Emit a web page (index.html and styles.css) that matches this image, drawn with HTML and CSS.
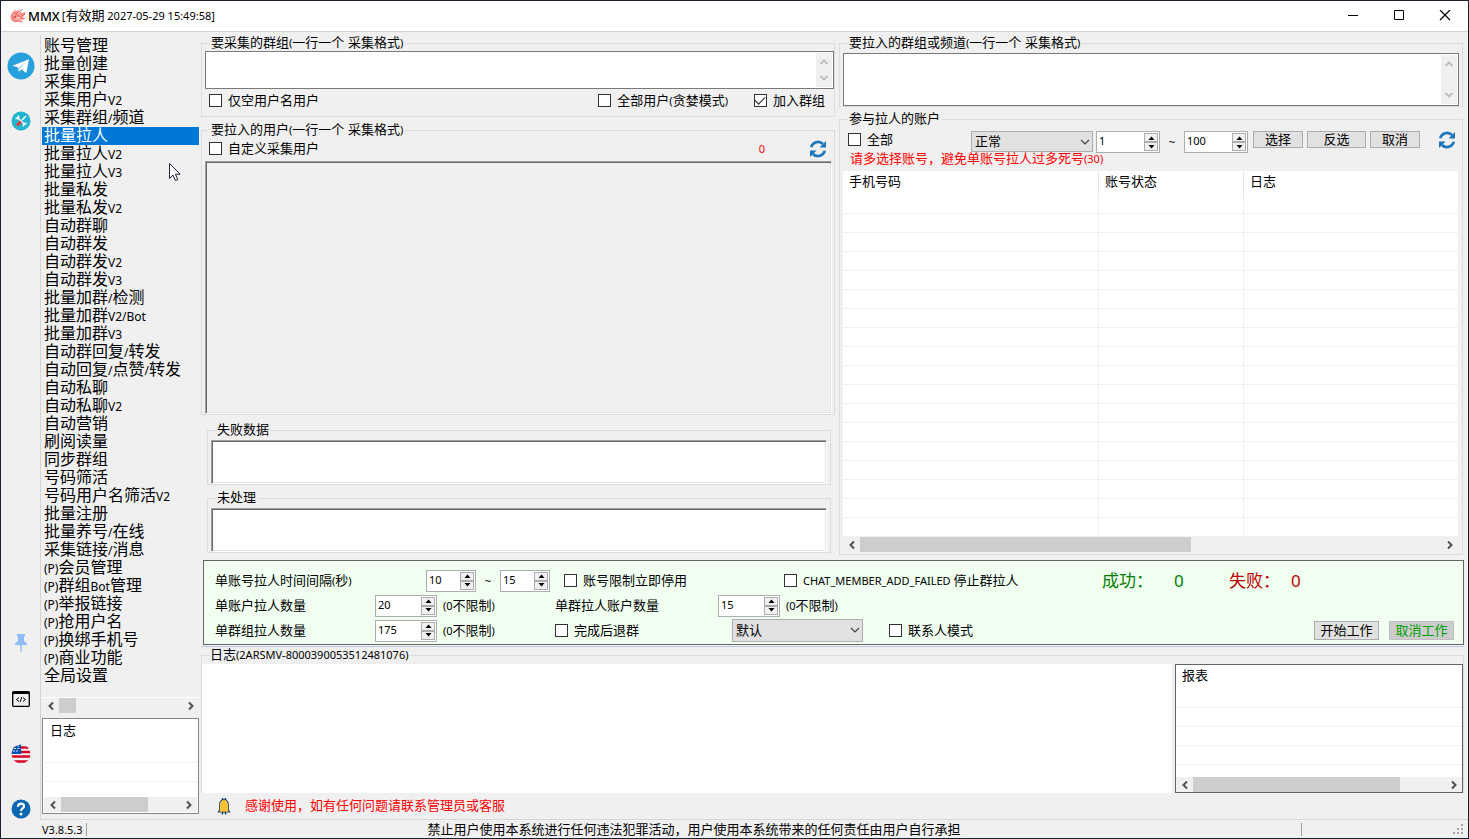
FILE: index.html
```html
<!DOCTYPE html>
<html lang="zh-CN">
<head>
    <meta charset="UTF-8">
    <meta name="viewport" content="width=device-width, initial-scale=1.0">
    <title>MMX</title>
    <link rel="stylesheet" href="styles.css">
</head>
<body>
    <!-- shared symbols -->
    <svg class="defs" aria-hidden="true">
        <symbol id="left" viewBox="0 0 10 10"><path d="M7 1.5 3.5 5 7 8.5" fill="none" stroke="currentColor" stroke-width="2"/></symbol>
        <symbol id="right" viewBox="0 0 10 10"><path d="M3 1.5 6.5 5 3 8.5" fill="none" stroke="currentColor" stroke-width="2"/></symbol>
        <symbol id="up" viewBox="0 0 10 10"><path d="M1.5 7 5 3.5 8.5 7" fill="none" stroke="currentColor" stroke-width="2"/></symbol>
        <symbol id="down" viewBox="0 0 10 10"><path d="M1.5 3 5 6.5 8.5 3" fill="none" stroke="currentColor" stroke-width="2"/></symbol>
        <symbol id="chevron" viewBox="0 0 10 10"><path d="M1 3 5 7 9 3" fill="none" stroke="currentColor" stroke-width="1.2"/></symbol>
        <symbol id="tri-up" viewBox="0 0 7 4"><path d="M.5 4h6L3.5 .5z"/></symbol>
        <symbol id="tri-down" viewBox="0 0 7 4"><path d="M.5 0h6L3.5 3.5z"/></symbol>
        <symbol id="refresh" viewBox="0 0 18 18">
            <path d="M2.2 7.2A7 7 0 0 1 14 4M15.8 10.8A7 7 0 0 1 4 14" fill="none" stroke="#1c75bc" stroke-width="2.6"/>
            <path d="M17 1v6.5h-6.5zM1 17v-6.5h6.5z" fill="#1c75bc"/>
        </symbol>
    </svg>

    <header class="titlebar">
        <svg class="app-icon" viewBox="0 0 16 16">
            <path d="M2 5 6 1 5 4l3-1.500c2 0 3 1.500 3.500 3L15 4c1 2-.5 4-2.500 5 1 1 2 1.500 3 1-1 2-3 2-4 1 0 2 1 2.500 2 2.500-2 1.500-4 .5-5 0C6 15 2 14 1 11c-1-2 0-4 1-6z" fill="#f4837d"/>
            <path d="M3 6c2 3 4 4 7 4M4 12c2-2 5-1 8 1M9 4c0 2 1 3 2 4" fill="none" stroke="#fbd6d3"/>
            <circle cx="5" cy="9" r="1" fill="#b34a4a"/>
            <path d="M9 1l2 2 2-2" fill="none" stroke="#b9a0a0"/>
        </svg>
        <h1 class="app-name">MMX</h1>
        <span class="expiry"><span class="en">[</span>有效期<span class="en"> 2027-05-29 15:49:58]</span></span>
        <div class="window-buttons">
            <button aria-label="最小化"><svg viewBox="0 0 12 12"><path d="M1 5.5h10" stroke="#000"/></svg></button>
            <button aria-label="最大化"><svg viewBox="0 0 12 12"><path d="M1.5 .5h9v9h-9z" fill="none" stroke="#000"/></svg></button>
            <button aria-label="关闭"><svg viewBox="0 0 12 12"><path d="M1 0l10 10M11 0 1 10" stroke="#000" stroke-width="1.2"/></svg></button>
        </div>
    </header>

    <div class="main">
        <nav class="rail">
            <a href="#telegram" class="rail-top" aria-label="Telegram">
                <svg viewBox="0 0 28 28">
                    <circle cx="14" cy="14" r="13.5" fill="#27a0de"/>
                    <path d="M5.5 13.7 22 7.2 19.3 21l-5-3.7-2.5 2.5-.6-4.3z" fill="#fff"/>
                    <path d="M11.2 15.5 19 9.8l-5.8 6.6-1.4 3.4z" fill="#b9dcf0"/>
                </svg>
            </a>
            <a href="#tools" aria-label="工具">
                <svg viewBox="0 0 20 20">
                    <circle cx="10" cy="10" r="9.5" fill="#22b5d0"/>
                    <path d="M6 6l8 8" stroke="#fff" stroke-width="1.5"/>
                    <path d="M4.500 7.500 6.500 7.500 7.500 6.500 7.500 4.500M15.500 12.500h-2l-1 1v2" fill="none" stroke="#fff" stroke-width="1.500"/>
                    <path d="M15 5 11 9" stroke="#fff" stroke-width="1.4"/>
                    <path d="M10 10.500 6 14.500" stroke="#e63b3b" stroke-width="3"/>
                </svg>
            </a>
            <a href="#pin" class="rail-bottom" aria-label="置顶">
                <svg viewBox="0 0 20 20">
                    <path d="M6 0h8v2l-1 1v4l3 2.500v1.500H4V9.500L7 7V3L6 2z" fill="#8fbcf5"/>
                    <path d="M9.300 11h1.400L10 18z" fill="#8fbcf5" stroke="#8fbcf5" stroke-width=".6"/>
                </svg>
            </a>
            <a href="#code" aria-label="脚本">
                <svg viewBox="0 0 20 20">
                    <rect x="1.700" y="2.700" width="16.600" height="14.600" rx="1" fill="none" stroke="#000" stroke-width="1.300"/>
                    <path d="M1.500 4h17" stroke="#000" stroke-width="2"/>
                    <path d="M8 8.500 5.500 10.500 8 12.500M12 8.500l2.500 2-2.500 2M10.800 8l-1.600 5" fill="none" stroke="#000"/>
                </svg>
            </a>
            <a href="#lang" aria-label="语言">
                <svg viewBox="0 0 20 20">
                    <clipPath id="flagclip"><circle cx="10" cy="10" r="9.5"/></clipPath>
                    <g clip-path="url(#flagclip)">
                        <path d="M0 0h20v20H0z" fill="#f4f4f4"/>
                        <path d="M0 3.500h20M0 8h20M0 12.500h20M0 17.500h20" stroke="#d80027" stroke-width="2.400"/>
                        <path d="M0 0h10v10H0z" fill="#0052b4"/>
                        <path d="M2 7h2M5 7h2M3 4.500h2M6.500 4.500h2M6 2h2" stroke="#dfe9f5"/>
                    </g>
                </svg>
            </a>
            <a href="#help" class="help" aria-label="帮助">
                <svg viewBox="0 0 20 20">
                    <circle cx="10" cy="10" r="9.5" fill="#0b67b2"/>
                    <path d="M7 7.800C7 5.500 8.300 4.600 10 4.600s3 1 3 2.600c0 2.200-2.900 2.300-2.900 4.700" fill="none" stroke="#fff" stroke-width="2.200"/>
                    <circle cx="10" cy="15" r="1.5" fill="#fff"/>
                </svg>
            </a>
        </nav>

        <aside class="sidebar">
            <ul class="menu">
                <li><a href="#m1">账号管理</a></li>
                <li><a href="#m2">批量创建</a></li>
                <li><a href="#m3">采集用户</a></li>
                <li><a href="#m4">采集用户<span class="en">V2</span></a></li>
                <li><a href="#m5">采集群组<span class="en">/</span>频道</a></li>
                <li><a href="#m6" class="active">批量拉人</a></li>
                <li><a href="#m7">批量拉人<span class="en">V2</span></a></li>
                <li><a href="#m8">批量拉人<span class="en">V3</span></a></li>
                <li><a href="#m9">批量私发</a></li>
                <li><a href="#m10">批量私发<span class="en">V2</span></a></li>
                <li><a href="#m11">自动群聊</a></li>
                <li><a href="#m12">自动群发</a></li>
                <li><a href="#m13">自动群发<span class="en">V2</span></a></li>
                <li><a href="#m14">自动群发<span class="en">V3</span></a></li>
                <li><a href="#m15">批量加群<span class="en">/</span>检测</a></li>
                <li><a href="#m16">批量加群<span class="en">V2/Bot</span></a></li>
                <li><a href="#m17">批量加群<span class="en">V3</span></a></li>
                <li><a href="#m18">自动群回复<span class="en">/</span>转发</a></li>
                <li><a href="#m19">自动回复<span class="en">/</span>点赞<span class="en">/</span>转发</a></li>
                <li><a href="#m20">自动私聊</a></li>
                <li><a href="#m21">自动私聊<span class="en">V2</span></a></li>
                <li><a href="#m22">自动营销</a></li>
                <li><a href="#m23">刷阅读量</a></li>
                <li><a href="#m24">同步群组</a></li>
                <li><a href="#m25">号码筛活</a></li>
                <li><a href="#m26">号码用户名筛活<span class="en">V2</span></a></li>
                <li><a href="#m27">批量注册</a></li>
                <li><a href="#m28">批量养号<span class="en">/</span>在线</a></li>
                <li><a href="#m29">采集链接<span class="en">/</span>消息</a></li>
                <li><a href="#m30"><span class="en">(P)</span>会员管理</a></li>
                <li><a href="#m31"><span class="en">(P)</span>群组<span class="en">Bot</span>管理</a></li>
                <li><a href="#m32"><span class="en">(P)</span>举报链接</a></li>
                <li><a href="#m33"><span class="en">(P)</span>抢用户名</a></li>
                <li><a href="#m34"><span class="en">(P)</span>换绑手机号</a></li>
                <li><a href="#m35"><span class="en">(P)</span>商业功能</a></li>
                <li><a href="#m36">全局设置</a></li>
            </ul>
            <div class="hscroll menu-scroll">
                <button aria-label="向左"><svg><use href="#left"/></svg></button>
                <div class="track"><div class="thumb thumb-menu"></div></div>
                <button aria-label="向右"><svg><use href="#right"/></svg></button>
            </div>
            <div class="side-log">
                <div class="list-view">
                    <table data-rows="4">
                        <thead><tr><th>日志</th></tr></thead>
                        <tbody></tbody>
                    </table>
                </div>
                <div class="hscroll">
                    <button aria-label="向左"><svg><use href="#left"/></svg></button>
                    <div class="track"><div class="thumb thumb-side"></div></div>
                    <button aria-label="向右"><svg><use href="#right"/></svg></button>
                </div>
            </div>
        </aside>

        <main class="content">
            <div class="top-area">
                <div class="column">
                    <fieldset class="group group-source">
                        <legend>要采集的群组<span class="en">(</span>一行一个 采集格式<span class="en">)</span></legend>
                        <div class="memo memo-small">
                            <textarea aria-label="要采集的群组"></textarea>
                            <div class="vscroll">
                                <svg><use href="#up"/></svg>
                                <svg><use href="#down"/></svg>
                            </div>
                        </div>
                        <div class="check-row">
                            <label class="check"><input type="checkbox">仅空用户名用户</label>
                            <label class="check push"><input type="checkbox"><span>全部用户<span class="en">(</span>贪婪模式<span class="en">)</span></span></label>
                            <label class="check join"><input type="checkbox" checked>加入群组</label>
                        </div>
                    </fieldset>

                    <fieldset class="group group-users">
                        <legend>要拉入的用户<span class="en">(</span>一行一个 采集格式<span class="en">)</span></legend>
                        <div class="check-row">
                            <label class="check"><input type="checkbox">自定义采集用户</label>
                            <span class="count push en">0</span>
                            <button class="refresh" aria-label="刷新"><svg><use href="#refresh"/></svg></button>
                        </div>
                        <textarea class="sunken readonly" readonly aria-label="要拉入的用户"></textarea>
                    </fieldset>

                    <fieldset class="group group-inner">
                        <legend>失败数据</legend>
                        <textarea class="sunken" aria-label="失败数据"></textarea>
                    </fieldset>

                    <fieldset class="group group-inner">
                        <legend>未处理</legend>
                        <textarea class="sunken" aria-label="未处理"></textarea>
                    </fieldset>
                </div>

                <div class="column">
                    <fieldset class="group group-target">
                        <legend>要拉入的群组或频道<span class="en">(</span>一行一个 采集格式<span class="en">)</span></legend>
                        <div class="memo memo-large">
                            <textarea aria-label="要拉入的群组或频道"></textarea>
                            <div class="vscroll">
                                <svg><use href="#up"/></svg>
                                <svg><use href="#down"/></svg>
                            </div>
                        </div>
                    </fieldset>

                    <fieldset class="group group-accounts">
                        <legend>参与拉人的账户</legend>
                        <div class="account-bar">
                            <label class="check check-all"><input type="checkbox">全部</label>
                            <div class="dropdown dropdown-status">
                                <select aria-label="账号状态"><option>正常</option></select>
                                <svg><use href="#chevron"/></svg>
                            </div>
                            <div class="spin">
                                <input type="text" value="1" aria-label="起始">
                                <div class="spin-buttons">
                                    <button aria-label="增加"><svg><use href="#tri-up"/></svg></button>
                                    <button aria-label="减少"><svg><use href="#tri-down"/></svg></button>
                                </div>
                            </div>
                            <span class="tilde en">~</span>
                            <div class="spin">
                                <input type="text" value="100" aria-label="结束">
                                <div class="spin-buttons">
                                    <button aria-label="增加"><svg><use href="#tri-up"/></svg></button>
                                    <button aria-label="减少"><svg><use href="#tri-down"/></svg></button>
                                </div>
                            </div>
                            <div class="account-buttons">
                                <button class="btn">选择</button>
                                <button class="btn btn-wide">反选</button>
                                <button class="btn">取消</button>
                            </div>
                            <button class="refresh push" aria-label="刷新"><svg><use href="#refresh"/></svg></button>
                        </div>
                        <p class="warning">请多选择账号，避免单账号拉人过多死号<span class="en">(30)</span></p>
                        <div class="list-view">
                            <table data-rows="30">
                                <thead><tr><th class="col-phone">手机号码</th><th class="col-status">账号状态</th><th>日志</th></tr></thead>
                                <tbody></tbody>
                            </table>
                        </div>
                        <div class="hscroll">
                            <button aria-label="向左"><svg><use href="#left"/></svg></button>
                            <div class="track"><div class="thumb thumb-accounts"></div></div>
                            <button aria-label="向右"><svg><use href="#right"/></svg></button>
                        </div>
                    </fieldset>
                </div>
            </div>

            <section class="settings">
                <div class="setting-row">
                    <span class="label-interval">单账号拉人时间间隔<span class="en">(</span>秒<span class="en">)</span></span>
                    <div class="spin spin-short">
                        <input type="text" value="10" aria-label="最小间隔">
                        <div class="spin-buttons">
                            <button aria-label="增加"><svg><use href="#tri-up"/></svg></button>
                            <button aria-label="减少"><svg><use href="#tri-down"/></svg></button>
                        </div>
                    </div>
                    <span class="tilde en">~</span>
                    <div class="spin spin-short">
                        <input type="text" value="15" aria-label="最大间隔">
                        <div class="spin-buttons">
                            <button aria-label="增加"><svg><use href="#tri-up"/></svg></button>
                            <button aria-label="减少"><svg><use href="#tri-down"/></svg></button>
                        </div>
                    </div>
                    <label class="check check-limit"><input type="checkbox">账号限制立即停用</label>
                    <label class="check check-failed"><input type="checkbox"><span><span class="en">CHAT_MEMBER_ADD_FAILED </span>停止群拉人</span></label>
                    <span class="stat success">成功：</span><span class="stat stat-num success">0</span>
                    <span class="stat failure">失败：</span><span class="stat failure">0</span>
                </div>
                <div class="setting-row">
                    <label class="label-count" for="perAccount">单账户拉人数量</label>
                    <div class="spin spin-mid">
                        <input type="text" id="perAccount" value="20">
                        <div class="spin-buttons">
                            <button aria-label="增加"><svg><use href="#tri-up"/></svg></button>
                            <button aria-label="减少"><svg><use href="#tri-down"/></svg></button>
                        </div>
                    </div>
                    <span class="hint"><span class="en">(0</span>不限制<span class="en">)</span></span>
                    <label class="label-accounts" for="perGroupAccount">单群拉人账户数量</label>
                    <div class="spin spin-mid">
                        <input type="text" id="perGroupAccount" value="15">
                        <div class="spin-buttons">
                            <button aria-label="增加"><svg><use href="#tri-up"/></svg></button>
                            <button aria-label="减少"><svg><use href="#tri-down"/></svg></button>
                        </div>
                    </div>
                    <span class="hint"><span class="en">(0</span>不限制<span class="en">)</span></span>
                </div>
                <div class="setting-row">
                    <label class="label-count" for="perGroup">单群组拉人数量</label>
                    <div class="spin spin-mid">
                        <input type="text" id="perGroup" value="175">
                        <div class="spin-buttons">
                            <button aria-label="增加"><svg><use href="#tri-up"/></svg></button>
                            <button aria-label="减少"><svg><use href="#tri-down"/></svg></button>
                        </div>
                    </div>
                    <span class="hint"><span class="en">(0</span>不限制<span class="en">)</span></span>
                    <label class="check check-leave"><input type="checkbox">完成后退群</label>
                    <div class="dropdown dropdown-mode">
                        <select aria-label="模式"><option>默认</option></select>
                        <svg><use href="#chevron"/></svg>
                    </div>
                    <label class="check check-contact"><input type="checkbox">联系人模式</label>
                    <div class="work-buttons">
                        <button class="btn btn-work">开始工作</button>
                        <button class="btn btn-work btn-stop">取消工作</button>
                    </div>
                </div>
            </section>

            <section class="log-area">
                <fieldset class="group group-log">
                    <legend>日志<span class="en">(2ARSMV-8000390053512481076)</span></legend>
                    <div class="log-body">
                        <textarea class="log-text" aria-label="日志"></textarea>
                        <div class="report">
                            <div class="list-view">
                                <table data-rows="6">
                                    <thead><tr><th>报表</th></tr></thead>
                                    <tbody></tbody>
                                </table>
                            </div>
                            <div class="hscroll">
                                <button aria-label="向左"><svg><use href="#left"/></svg></button>
                                <div class="track"><div class="thumb thumb-report"></div></div>
                                <button aria-label="向右"><svg><use href="#right"/></svg></button>
                            </div>
                        </div>
                    </div>
                </fieldset>
            </section>

            <p class="notice">
                <svg viewBox="0 0 14 18">
                    <path d="M5.500 3V1M8.500 3V1M5.500 15v2.500M8.500 15v2.500" stroke="#123a63" stroke-width="1.400"/>
                    <path d="M2.200 13V7.500C2.200 4.500 4.200 2.300 7 2.300s4.800 2.200 4.800 5.200V13l1.400 1.200v1.300H.8v-1.300z" fill="#123a63"/>
                    <path d="M3 13.500v-6C3 4.800 4.800 3 7 3s4 1.800 4 4.500v6l1 1.300H2z" fill="#fdc13a"/>
                </svg>
                感谢使用，如有任何问题请联系管理员或客服
            </p>
        </main>
    </div>

    <footer class="statusbar">
        <span class="version en">V3.8.5.3</span>
        <span class="legal">禁止用户使用本系统进行任何违法犯罪活动，用户使用本系统带来的任何责任由用户自行承担</span>
        <svg class="grip" viewBox="0 0 12 12"><path d="M9 1h2v2H9zM5 5h2v2H5zM9 5h2v2H9zM1 9h2v2H1zM5 9h2v2H5zM9 9h2v2H9z" fill="#a8a8a8"/></svg>
    </footer>

    <svg class="pointer" viewBox="0 0 13 20"><path d="M1.500 1.500v15l3.500-3.400 2.400 5.500 2.400-1-2.400-5.400h4.800z" fill="#fff" stroke="#223" stroke-width="1"/></svg>

    <script>
        // fill the list views with empty rows
        document.querySelectorAll("table[data-rows]").forEach(table => {
            const columns = table.querySelectorAll("th").length;
            const body = table.querySelector("tbody");
            for (let i = 0; i < Number(table.dataset.rows); i++) {
                const row = body.insertRow();
                for (let j = 0; j < columns; j++) {
                    row.insertCell();
                }
            }
        });
    </script>
</body>
</html>
```
FILE: styles.css
```css
* {
    margin: 0;
    padding: 0;
    box-sizing: border-box;
}

body {
    display: flex;
    flex-direction: column;
    height: 100vh;
    border: 1px solid #16202e;
    background-color: #f0f0f0;
    color: #000;
    font-family: "Liberation Sans", "Noto Sans CJK SC", sans-serif;
    font-size: 13px;
    line-height: 16px;
    overflow: hidden;
    position: relative;
}

button,
input,
select,
textarea {
    font: inherit;
    color: inherit;
    border-radius: 0;
    outline: none;
}

button {
    border: none;
    background: none;
}

textarea {
    display: block;
    resize: none;
    border: none;
    background-color: #fff;
    overflow: hidden;
}

a {
    color: inherit;
    text-decoration: none;
}

svg {
    display: block;
}

.defs {
    display: none;
}

.en {
    font-family: "Noto Sans", sans-serif;
    font-size: 11px;
    white-space: pre;
}

.push {
    margin-left: auto;
}

/* Title bar */
.titlebar {
    display: flex;
    align-items: center;
    flex: none;
    height: 31px;
    padding-left: 9px;
    background-color: #fff;
    border-bottom: 1px solid #d2d2d2;
}

.app-icon {
    width: 16px;
    height: 16px;
    margin-right: 2px;
}

.app-name {
    font-family: "Noto Sans", sans-serif;
    font-size: 13px;
    font-weight: 500;
    margin-right: 2px;
}

.window-buttons {
    display: flex;
    margin-left: auto;
}

.window-buttons button {
    display: flex;
    align-items: center;
    justify-content: center;
    width: 46px;
    height: 30px;
}

.window-buttons svg {
    width: 12px;
    height: 12px;
}

/* Body of the window */
.main {
    display: flex;
    flex: 1;
    min-height: 0;
}

.rail {
    display: flex;
    flex-direction: column;
    align-items: center;
    flex: none;
    width: 39px;
    gap: 35px;
    padding-top: 20px;
}

.rail svg {
    width: 20px;
    height: 20px;
}

.rail .rail-top svg {
    width: 28px;
    height: 28px;
}

.rail-top {
    margin-bottom: -4px;
}

.rail-bottom {
    margin-top: auto;
}

/* Sidebar */
.sidebar {
    display: flex;
    flex-direction: column;
    flex: none;
    width: 159px;
    margin-top: 3px;
    padding: 2px 0 5px 1px;
    border-left: 1px solid #d5d5d5;
}

.menu {
    flex: 1;
    min-height: 0;
    overflow: hidden;
    list-style: none;
    font-size: 16px;
    line-height: 18px;
}

.menu a {
    display: block;
    height: 18px;
    padding-left: 2px;
    white-space: nowrap;
}

.menu .en {
    font-size: 12px;
}

.menu a.active {
    background-color: #0078d7;
    color: #fff;
}

.menu-scroll {
    border-top: 1px solid #fff;
    margin-bottom: 5px;
}

.side-log {
    display: flex;
    flex-direction: column;
    height: 96px;
    padding: 1px;
    border: 1px solid #828790;
    background-color: #fff;
}

/* Scroll bars */
.hscroll {
    display: flex;
    flex: none;
    background-color: #f0f0f0;
}

.hscroll button {
    display: flex;
    align-items: center;
    justify-content: center;
    width: 17px;
    height: 15px;
    color: #505050;
}

.hscroll svg,
.vscroll svg {
    width: 10px;
    height: 10px;
}

.track {
    flex: 1;
}

.thumb {
    height: 15px;
    background-color: #cdcdcd;
}

.thumb-menu {
    width: 14%;
}

.thumb-side {
    width: 73%;
}

.thumb-accounts {
    width: 57%;
}

.thumb-report {
    width: 82%;
}

.vscroll {
    display: flex;
    flex-direction: column;
    justify-content: space-between;
    align-items: center;
    width: 16px;
    padding: 4px 0;
    background-color: #f0f0f0;
    color: #bfbfbf;
}

/* List views */
.list-view {
    flex: 1;
    min-height: 0;
    overflow: hidden;
    background-color: #fff;
}

table {
    width: 100%;
    border-collapse: separate;
    border-spacing: 0;
    table-layout: fixed;
}

th {
    height: 24px;
    padding: 0 0 2px 6px;
    font-weight: normal;
    text-align: left;
    border-right: 1px solid #e5e5e5;
}

td {
    height: 19px;
    border-right: 1px solid #f0f0f0;
    border-bottom: 1px solid #f0f0f0;
}

th:last-child,
td:last-child {
    border-right: none;
}

.col-phone {
    width: 256px;
}

.col-status {
    width: 145px;
}

/* Groups */
.content {
    display: flex;
    flex-direction: column;
    flex: 1;
    min-width: 0;
    padding: 3px 4px 0 2px;
}

.top-area {
    display: grid;
    grid-template-columns: 634fr 624fr;
    gap: 4px;
    flex: 1;
    min-height: 0;
    margin-right: 1px;
}

.column {
    display: flex;
    flex-direction: column;
    min-width: 0;
    min-height: 0;
}

.group {
    display: flex;
    flex-direction: column;
    min-width: 0;
    border: 1px solid #dcdcdc;
}

.group legend {
    height: 16px;
    margin-left: 5px;
    padding: 0 2px 0 1px;
    white-space: nowrap;
}

.group-source {
    padding: 0 0 4px 3px;
}

.group-users {
    flex: 1;
    min-height: 0;
    margin-top: 5px;
    padding: 0 2px 0 3px;
}

.group-users textarea {
    flex: 1;
}

.group-inner {
    margin: 5px 4px 0 6px;
    padding: 2px 3px 0 3px;
}

.group-users + .group-inner {
    margin-top: 7px;
}

.group-inner:last-child {
    margin-bottom: 2px;
}

.group-inner textarea {
    height: 44px;
}

.group-target {
    padding: 2px 3px 0 3px;
}

.group-accounts {
    flex: 1;
    min-height: 0;
    margin-top: 4px;
    padding: 4px 4px 2px 3px;
}

.memo {
    display: flex;
    padding: 1px;
    border: 1px solid #7a7a7a;
    background-color: #fff;
}

.memo textarea {
    flex: 1;
    min-width: 0;
}

.memo-small {
    height: 38px;
}

.memo-large {
    height: 53px;
}

.sunken {
    width: 100%;
    border: 1px solid;
    border-color: #a0a0a0 #fff #fff #a0a0a0;
    box-shadow: inset 1px 1px #696969, inset -1px -1px #e3e3e3;
}

.readonly {
    background-color: #f0f0f0;
}

/* Form controls */
.check-row {
    display: flex;
    align-items: center;
    height: 23px;
    padding: 0 9px 0 4px;
}

.group-users .check-row {
    padding: 0 5px 2px 4px;
}

.check {
    display: flex;
    align-items: center;
    gap: 6px;
    height: 17px;
    white-space: nowrap;
}

.check input {
    appearance: none;
    display: grid;
    place-items: center;
    flex: none;
    width: 13px;
    height: 13px;
    border: 1px solid #333;
    background-color: #fff;
}

.check input:checked::before {
    content: "";
    width: 9px;
    height: 5px;
    margin-bottom: 3px;
    border-left: 1px solid #222;
    border-bottom: 1px solid #222;
    transform: rotate(-45deg);
}

.join {
    margin-left: 26px;
}

.count {
    margin-right: 44px;
    color: #f00;
}

.refresh svg {
    width: 18px;
    height: 18px;
}

.account-bar {
    display: flex;
    align-items: flex-start;
    flex: none;
    height: 21px;
    padding: 0 2px 0 5px;
}

.check-all {
    width: 123px;
}

.dropdown {
    position: relative;
    height: 21px;
}

.dropdown select {
    appearance: none;
    display: block;
    width: 100%;
    height: 100%;
    padding: 0 3px;
    border: 1px solid #adadad;
    background-color: #e1e1e1;
}

.dropdown svg {
    position: absolute;
    right: 3px;
    top: 6px;
    width: 10px;
    height: 10px;
    color: #444;
    pointer-events: none;
}

.dropdown-status {
    width: 122px;
    margin-right: 3px;
}

.dropdown-mode {
    width: 131px;
    height: 23px;
}

.spin {
    display: flex;
    flex: none;
    width: 64px;
    height: 22px;
    padding: 1px;
    border: 1px solid #abadb3;
    background-color: #fff;
}

.spin input {
    flex: 1;
    min-width: 0;
    height: 15px;
    padding-left: 1px;
    border: none;
    background: none;
    font-family: "Noto Sans", sans-serif;
    font-size: 11px;
    line-height: 15px;
}

.spin-buttons {
    display: flex;
    flex-direction: column;
    width: 14px;
}

.spin-buttons button {
    display: flex;
    align-items: center;
    justify-content: center;
    flex: 1;
    border: 1px solid #adadad;
    background-color: #f0f0f0;
}

.spin-buttons svg {
    width: 7px;
    height: 4px;
}

.spin-short {
    width: 50px;
}

.spin-mid {
    width: 62px;
}

.tilde {
    width: 24px;
    text-align: center;
    line-height: 21px;
}

.account-buttons {
    display: flex;
    gap: 4px;
    margin-left: 5px;
}

.btn {
    width: 50px;
    height: 17px;
    border: 1px solid #adadad;
    background-color: #e1e1e1;
    line-height: 15px;
}

.btn-wide {
    width: 59px;
}

.warning {
    flex: none;
    margin: 0 0 5px 7px;
    color: #f00;
    line-height: 14px;
}

/* Settings panel */
.settings {
    display: flex;
    flex-direction: column;
    gap: 2px;
    margin: 5px 0 1px 2px;
    padding: 8px 9px 2px 11px;
    border: 1px solid #646464;
    background-color: #f0fff0;
}

.setting-row {
    display: flex;
    align-items: center;
    height: 23px;
    white-space: nowrap;
}

.label-interval {
    width: 211px;
}

.label-count {
    width: 160px;
}

.label-accounts {
    width: 163px;
}

.hint {
    width: 112px;
    margin-left: 6px;
}

.check-limit {
    width: 220px;
    margin-left: 14px;
}

.check-failed {
    width: 318px;
}

.check-leave {
    width: 177px;
}

.check-contact {
    margin-left: 26px;
}

.stat {
    width: 72px;
    font-family: "Noto Sans", "Noto Sans CJK SC", sans-serif;
    font-size: 17px;
}

.stat-num {
    width: 55px;
}

.success {
    color: #008000;
}

.failure {
    color: #c00000;
}

.stat-num + .failure {
    width: 62px;
}

.work-buttons {
    display: flex;
    gap: 10px;
    margin-left: auto;
}

.btn-work {
    width: 65px;
    height: 19px;
    line-height: 17px;
}

.btn-stop {
    border-color: #bfbfbf;
    background-color: #ccc;
    color: #00a000;
}

/* Log and report */
.log-area {
    border-top: 1px solid #b9cade;
}

.group-log {
    padding-top: 1px;
    border-bottom: none;
}

.group-log legend {
    margin-left: 7px;
}

.log-body {
    display: flex;
    gap: 3px;
    height: 129px;
}

.log-text {
    flex: 1;
    min-width: 0;
    height: 100%;
}

.report {
    display: flex;
    flex-direction: column;
    width: 288px;
    border: 1px solid #646464;
}

.notice {
    display: flex;
    align-items: center;
    gap: 14px;
    height: 26px;
    padding-left: 16px;
    color: #f00;
}

.notice svg {
    width: 14px;
    height: 18px;
}

/* Status bar */
.statusbar {
    display: flex;
    align-items: center;
    flex: none;
    height: 19px;
    margin-left: 38px;
    padding: 0 4px 0 3px;
    border-top: 1px solid #d7d7d7;
}

.version {
    width: 45px;
    line-height: 13px;
    border-right: 1px solid #a0a0a0;
}

.legal {
    flex: 1;
    line-height: 13px;
    text-align: center;
    border-right: 1px solid #a0a0a0;
}

.grip {
    width: 12px;
    height: 12px;
    margin-left: 150px;
}

/* Mouse pointer */
.pointer {
    position: absolute;
    left: 167px;
    top: 161px;
    width: 13px;
    height: 20px;
}
```
